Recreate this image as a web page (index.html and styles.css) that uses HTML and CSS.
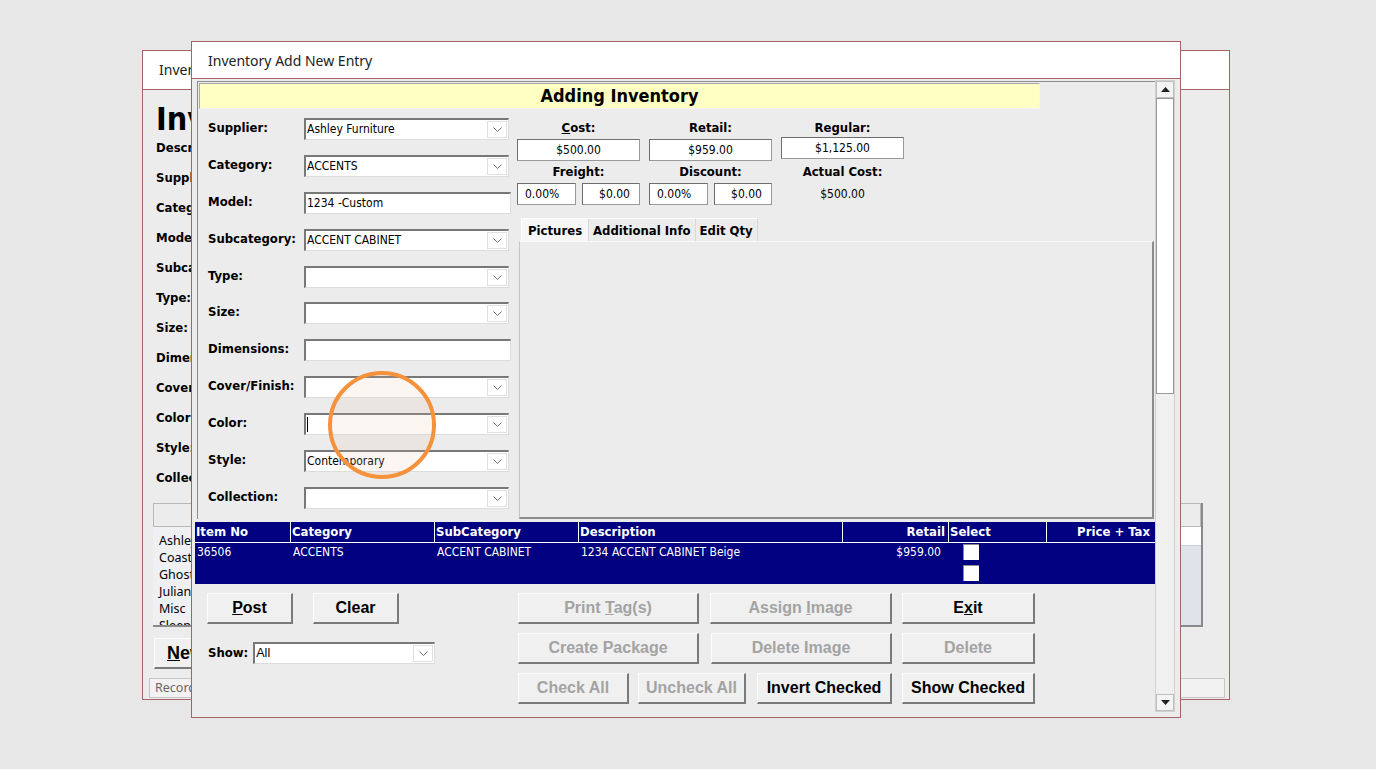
FILE: index.html
```html
<!DOCTYPE html>
<html lang="en">
<head>
    <meta charset="UTF-8">
    <title>Inventory Add New Entry</title>
    <link rel="stylesheet" href="styles.css">
</head>
<body>
    <div class="desk">
        <!-- window behind the dialog -->
        <div class="win back">
            <div class="win-title">Inventory Lookup</div>
            <div class="back-body">
                <div class="back-head">Inventory</div>
                <ul class="back-labels">
                    <li>Description:</li>
                    <li>Supplier:</li>
                    <li>Category:</li>
                    <li>Model:</li>
                    <li>Subcategory:</li>
                    <li>Type:</li>
                    <li>Size:</li>
                    <li>Dimensions:</li>
                    <li>Cover/Finish:</li>
                    <li>Color:</li>
                    <li>Style:</li>
                    <li>Collection:</li>
                </ul>
                <div class="back-list">
                    <div class="back-list-head"></div>
                    <div class="back-list-body">
                        <ul class="vendors">
                            <li>Ashley Furniture</li>
                            <li>Coaster</li>
                            <li>Ghost Inventory</li>
                            <li>Juliana</li>
                            <li>Misc</li>
                            <li>Sleep</li>
                        </ul>
                        <div class="back-gap"></div>
                        <div class="back-grid">
                            <div class="back-grid-top"></div>
                            <div class="back-grid-rows"></div>
                        </div>
                    </div>
                </div>
                <button class="btn back-new"><u>N</u>ew</button>
                <div class="status"><span>Record: 1 of 6</span></div>
            </div>
        </div>

        <!-- the dialog -->
        <div class="win front">
            <div class="win-title">Inventory Add New Entry</div>
            <div class="dlg-body">
                <div class="dlg-main">
                    <div class="frame">
                        <div class="banner">Adding Inventory</div>
                        <div class="cols">
                            <div class="fields">
                                <label>Supplier:</label>
                                <div class="combo"><span>Ashley Furniture</span><i class="dd"></i></div>
                                <label>Category:</label>
                                <div class="combo"><span>ACCENTS</span><i class="dd"></i></div>
                                <label>Model:</label>
                                <div class="combo text"><span>1234 -Custom</span></div>
                                <label>Subcategory:</label>
                                <div class="combo"><span>ACCENT CABINET</span><i class="dd"></i></div>
                                <label>Type:</label>
                                <div class="combo"><span></span><i class="dd"></i></div>
                                <label>Size:</label>
                                <div class="combo"><span></span><i class="dd"></i></div>
                                <label>Dimensions:</label>
                                <div class="combo text"><span></span></div>
                                <label>Cover/Finish:</label>
                                <div class="combo"><span></span><i class="dd"></i></div>
                                <label>Color:</label>
                                <div class="combo"><span><b class="caret"></b></span><i class="dd"></i></div>
                                <label>Style:</label>
                                <div class="combo"><span>Contemporary</span><i class="dd"></i></div>
                                <label>Collection:</label>
                                <div class="combo"><span></span><i class="dd"></i></div>
                            </div>

                            <div class="right">
                                <div class="prices">
                                    <div class="plabel"><u>C</u>ost:</div>
                                    <div class="plabel">Retail:</div>
                                    <div class="plabel">Regular:</div>

                                    <div class="money">$500.00</div>
                                    <div class="money">$959.00</div>
                                    <div class="money reg">$1,125.00</div>

                                    <div class="plabel">Freight:</div>
                                    <div class="plabel">Discount:</div>
                                    <div class="plabel">Actual Cost:</div>

                                    <div class="pair">
                                        <div class="money">0.00%</div>
                                        <div class="money">$0.00</div>
                                    </div>
                                    <div class="pair">
                                        <div class="money">0.00%</div>
                                        <div class="money">$0.00</div>
                                    </div>
                                    <div class="actual">$500.00</div>
                                </div>

                                <div class="tabs">
                                    <div class="tab active">Pictures</div>
                                    <div class="tab">Additional Info</div>
                                    <div class="tab">Edit Qty</div>
                                </div>
                                <div class="tab-panel"></div>
                            </div>
                        </div>
                    </div>

                    <div class="items">
                        <div class="items-head">
                            <div>Item No</div>
                            <div>Category</div>
                            <div>SubCategory</div>
                            <div>Description</div>
                            <div class="num">Retail</div>
                            <div>Select</div>
                            <div class="num">Price + Tax</div>
                        </div>
                        <div class="items-row">
                            <div>36506</div>
                            <div>ACCENTS</div>
                            <div>ACCENT CABINET</div>
                            <div>1234 ACCENT CABINET Beige</div>
                            <div class="num retail">$959.00</div>
                            <div class="checks">
                                <span class="check"></span>
                                <span class="check"></span>
                            </div>
                            <div></div>
                        </div>
                    </div>

                    <div class="actions">
                        <div class="act-left">
                            <div class="btn-row">
                                <button class="btn w-post"><u>P</u>ost</button>
                                <button class="btn w-clear">Clear</button>
                            </div>
                            <div class="show-row">
                                <label>Show:</label>
                                <div class="combo show"><span>All</span><i class="dd"></i></div>
                            </div>
                        </div>
                        <div class="act-right">
                            <div class="btn-row">
                                <button class="btn off w-print">Print <u>T</u>ag(s)</button>
                                <button class="btn off w-assign">Assign <u>I</u>mage</button>
                                <button class="btn w-exit">E<u>x</u>it</button>
                            </div>
                            <div class="btn-row">
                                <button class="btn off w-print">Create Package</button>
                                <button class="btn off w-delimg">Delete Image</button>
                                <button class="btn off w-exit">Delete</button>
                            </div>
                            <div class="btn-row">
                                <button class="btn off w-check">Check All</button>
                                <button class="btn off w-uncheck">Uncheck All</button>
                                <button class="btn w-invert">Invert Checked</button>
                                <button class="btn w-exit">Show Checked</button>
                            </div>
                        </div>
                    </div>
                </div>

                <div class="vscroll">
                    <div class="sb-btn"><svg width="9" height="5" viewBox="0 0 9 5"><polygon points="0,5 9,5 4.5,0" fill="#202020"/></svg></div>
                    <div class="sb-thumb"></div>
                    <div class="sb-track"></div>
                    <div class="sb-btn"><svg width="9" height="5" viewBox="0 0 9 5"><polygon points="0,0 9,0 4.5,5" fill="#202020"/></svg></div>
                </div>
            </div>
        </div>

        <div class="marker"></div>
    </div>
</body>
</html>
```

FILE: styles.css
```css
* {
    box-sizing: border-box;
}

body {
    margin: 0;
    background-color: #e7e7e7;
    font-family: "DejaVu Sans Condensed", "DejaVu Sans", sans-serif;
    font-size: 12px;
    color: #000;
}

.desk {
    position: relative;
    width: 1376px;
    height: 769px;
    overflow: hidden;
}

ul {
    list-style: none;
    margin: 0;
    padding: 0;
}

/* windows */
.win {
    position: absolute;
    background-color: #ececec;
    border: 1px solid #a46464;
}

.win-title {
    height: 38px;
    padding-left: 16px;
    line-height: 38px;
    background-color: #fff;
    border-bottom: 1px solid #a46464;
    font-family: "Noto Sans", sans-serif;
    font-size: 14px;
    color: #222;
    white-space: nowrap;
    overflow: hidden;
}

/* back window: only its two edges show past the dialog */
.back {
    left: 142px;
    top: 50px;
    width: 1088px;
    height: 650px;
}

.back .win-title {
    width: 48px;
    padding-right: 0;
    border-bottom: none;
    box-shadow: 1038px 0 0 #fff;
}

.back-body {
    padding: 14px 26px 0 10px;
    border-top: 1px solid #a46464;
}

.back-head {
    width: 38px;
    padding-left: 3px;
    height: 29px;
    line-height: 30px;
    font-size: 32px;
    font-weight: bold;
    white-space: nowrap;
    overflow: hidden;
}

.back-labels {
    width: 38px;
    padding-left: 3px;
    overflow: hidden;
}

.back-labels li {
    height: 30px;
    line-height: 30px;
    font-size: 13px;
    font-weight: bold;
    white-space: nowrap;
}

.back-list {
    margin-top: 10px;
    border-right: 2px solid #8a8a8a;
    border-bottom: 2px solid #8a8a8a;
}

.back-list-head {
    height: 24px;
    background-color: #ececec;
    border: 1px solid #b8b8b8;
}

.back-list-body {
    display: flex;
    height: 98px;
}

.vendors {
    width: 38px;
    padding: 5px 0 0 6px;
    background-color: #eef0f4;
    overflow: hidden;
    font-family: "Noto Sans", sans-serif;
    font-size: 12.5px;
}

.vendors li {
    height: 17px;
    line-height: 17px;
    white-space: nowrap;
}

.back-gap {
    width: 990px;
    background-color: #eef0f4;
}

.back-grid {
    flex: 1;
    display: flex;
    flex-direction: column;
}

.back-grid-top {
    height: 18px;
    background-color: #fff;
}

.back-grid-rows {
    flex: 1;
    background-color: #dfe4eb;
    border-top: 1px solid #c9cfd8;
}

.status {
    margin: 9px -22px 0 -4px;
    height: 20px;
    padding-left: 5px;
    line-height: 18px;
    border: 1px solid #c6c6c6;
    background-color: #f2f2f2;
    font-family: "Noto Sans", sans-serif;
    font-size: 12.5px;
    color: #666;
}

.status span {
    display: block;
    width: 40px;
    overflow: hidden;
    white-space: nowrap;
}

/* front dialog */
.front {
    left: 191px;
    top: 41px;
    width: 990px;
    height: 677px;
}

.front .win-title {
    height: 37px;
    line-height: 38px;
}

.dlg-body {
    display: flex;
    padding: 1px 5px 0 0;
}

.dlg-main {
    width: 963px;
}

.frame {
    margin: 1px 0 0 5px;
    padding: 1px 0 0 1px;
    border-top: 1px solid #8c8c8c;
    border-left: 1px solid #8c8c8c;
}

.banner {
    width: 841px;
    height: 26px;
    line-height: 24px;
    text-align: center;
    background-color: #ffffc4;
    border-top: 1px solid #a8a8a8;
    border-left: 1px solid #a8a8a8;
    border-bottom: 1px solid #f4f4f4;
    border-right: 1px solid #f4f4f4;
    font-size: 18px;
    font-weight: bold;
}

.cols {
    display: flex;
    align-items: flex-start;
    margin-top: 9px;
}

.fields {
    display: grid;
    grid-template-columns: 96px 205px;
    grid-auto-rows: 22px;
    row-gap: 14.9px;
    padding-left: 9px;
}

.fields label,
.show-row label {
    font-size: 13px;
    font-weight: bold;
    line-height: 20px;
}

.combo {
    display: flex;
    align-items: stretch;
    height: 22px;
    background-color: #fff;
    border-top: 2px solid #787878;
    border-left: 2px solid #787878;
    border-right: 1px solid #dcdcdc;
    border-bottom: 1px solid #dcdcdc;
}

.combo span {
    flex: 1;
    padding-left: 1px;
    line-height: 19px;
    white-space: nowrap;
    overflow: hidden;
}

.combo.text {
    width: 207px;
}

.dd {
    width: 20px;
    margin: 1px 1px 1px 0;
    border: 1px solid #e0e0e0;
    background: #fff url("data:image/svg+xml,%3Csvg xmlns='http://www.w3.org/2000/svg' width='9' height='5'%3E%3Cpolyline points='0.5,0.5 4.5,4.5 8.5,0.5' fill='none' stroke='%23707070' stroke-width='1'/%3E%3C/svg%3E") center no-repeat;
}

.caret {
    display: inline-block;
    width: 1px;
    height: 15px;
    margin-top: 2px;
    background-color: #000;
    vertical-align: top;
}

.right {
    margin: -1px 0 0 8px;
}

.prices {
    display: grid;
    grid-template-columns: 123px 123px 123px;
    grid-template-rows: 20px 24px 20px 24px;
    column-gap: 9px;
}

.plabel {
    text-align: center;
    font-size: 13px;
    font-weight: bold;
    line-height: 21px;
}

.money {
    align-self: end;
    height: 22px;
    line-height: 20px;
    text-align: center;
    background-color: #fff;
    border: 1px solid #9a9a9a;
    border-top-color: #6e6e6e;
    border-left-color: #6e6e6e;
}

.money.reg {
    align-self: start;
}

.pair {
    display: flex;
    align-self: end;
    gap: 6px;
}

.pair .money:first-child {
    width: 59px;
    text-align: left;
    padding-left: 7px;
}

.pair .money:last-child {
    width: 58px;
    text-align: right;
    padding-right: 9px;
}

.actual {
    align-self: end;
    height: 22px;
    line-height: 22px;
    text-align: center;
}

.tabs {
    display: flex;
    margin: 13px 0 0 4px;
}

.tab {
    height: 23px;
    padding: 0 4px;
    line-height: 23px;
    font-size: 13px;
    font-weight: bold;
    background-color: #ececec;
    border-top: 1px solid #fff;
    border-right: 1px solid #d8d8d8;
}

.tab.active {
    width: 68px;
    padding-left: 6px;
    background-color: #f7f7f7;
    border-left: 1px solid #fff;
}

.tab-panel {
    width: 635px;
    height: 278px;
    margin-left: 2px;
    border-top: 1px solid #fafafa;
    border-left: 1px solid #c4c4c4;
    border-right: 2px solid #8c8c8c;
    border-bottom: 2px solid #8c8c8c;
}

/* list of entered items */
.items {
    width: 960px;
    margin: 3px 0 0 3px;
    background-color: #000080;
    color: #fff;
}

.items-head,
.items-row {
    display: grid;
    grid-template-columns: 95px 143px 143px 263px 105px 97px 1fr;
    column-gap: 1px;
}

.items-head {
    height: 21px;
    background-color: #fff;
    border-bottom: 1px solid #fff;
    font-size: 13px;
    font-weight: bold;
}

.items-head div {
    padding-left: 1px;
    line-height: 20px;
    background-color: #000080;
}

.items-head .num {
    text-align: right;
    padding-right: 3px;
}

.items-head div:last-child {
    padding-right: 5px;
}

.items-row {
    height: 41px;
}

.items-row div {
    padding: 1px 0 0 2px;
    line-height: 16px;
}

.items-row .retail {
    text-align: right;
    padding-right: 7px;
}

.checks {
    display: flex;
    flex-direction: column;
    gap: 5px;
}

.items-row .checks {
    padding: 1px 0 0 14px;
}

.check {
    width: 16px;
    height: 16px;
    background-color: #fff;
    border-top: 1px solid #8a8a8a;
    border-left: 1px solid #8a8a8a;
}

/* buttons */
.actions {
    display: flex;
    padding-top: 9px;
}

.act-left {
    width: 326px;
    padding-left: 15px;
}

.act-right {
    display: flex;
    flex-direction: column;
    gap: 9px;
}

.btn-row {
    display: flex;
}

.act-left .btn-row {
    gap: 20px;
}

.btn {
    height: 31px;
    padding: 0;
    background-color: #f0f0f0;
    border-top: 1px solid #fdfdfd;
    border-left: 1px solid #fdfdfd;
    border-right: 2px solid #7a7a7a;
    border-bottom: 2px solid #7a7a7a;
    font-family: "Liberation Sans", Arial, sans-serif;
    font-size: 16px;
    font-weight: bold;
    color: #000;
}

.btn.off {
    color: #a3a3a3;
}

.btn.back-new {
    display: block;
    margin: 11px 0 0 1px;
    width: 120px;
    height: 31px;
    padding-left: 12px;
    text-align: left;
    font-size: 18px;
}

.w-post { width: 86px; }
.w-clear { width: 86px; }
.w-print { width: 181px; }
.w-assign { width: 182px; margin-left: 11px; }
.w-delimg { width: 181px; margin-left: 12px; }
.w-exit { width: 133px; margin-left: 10px; }
.w-check { width: 111px; }
.w-uncheck { width: 108px; margin-left: 9px; }
.w-invert { width: 135px; margin-left: 11px; }

.show-row {
    display: flex;
    align-items: center;
    gap: 5px;
    margin-top: 18px;
    padding-left: 1px;
}

.combo.show {
    width: 182px;
    font-family: "Liberation Sans", Arial, sans-serif;
    font-size: 12.5px;
}

/* scroll bar */
.vscroll {
    display: flex;
    flex-direction: column;
    width: 21px;
    height: 632px;
    border: 1px solid #d0d0d0;
    background-color: #f0f0f0;
}

.sb-btn {
    display: flex;
    align-items: center;
    justify-content: center;
    height: 17px;
    background-color: #f4f4f4;
    border: 1px solid #bdbdbd;
}

.sb-thumb {
    height: 296px;
    background-color: #fff;
    border: 1px solid #9a9a9a;
}

.sb-track {
    flex: 1;
}

/* orange highlight from the recording */
.marker {
    position: absolute;
    left: 328px;
    top: 371px;
    width: 108px;
    height: 108px;
    border: 4px solid #f6923c;
    border-radius: 50%;
    background-color: rgba(236, 190, 165, 0.14);
}
```
